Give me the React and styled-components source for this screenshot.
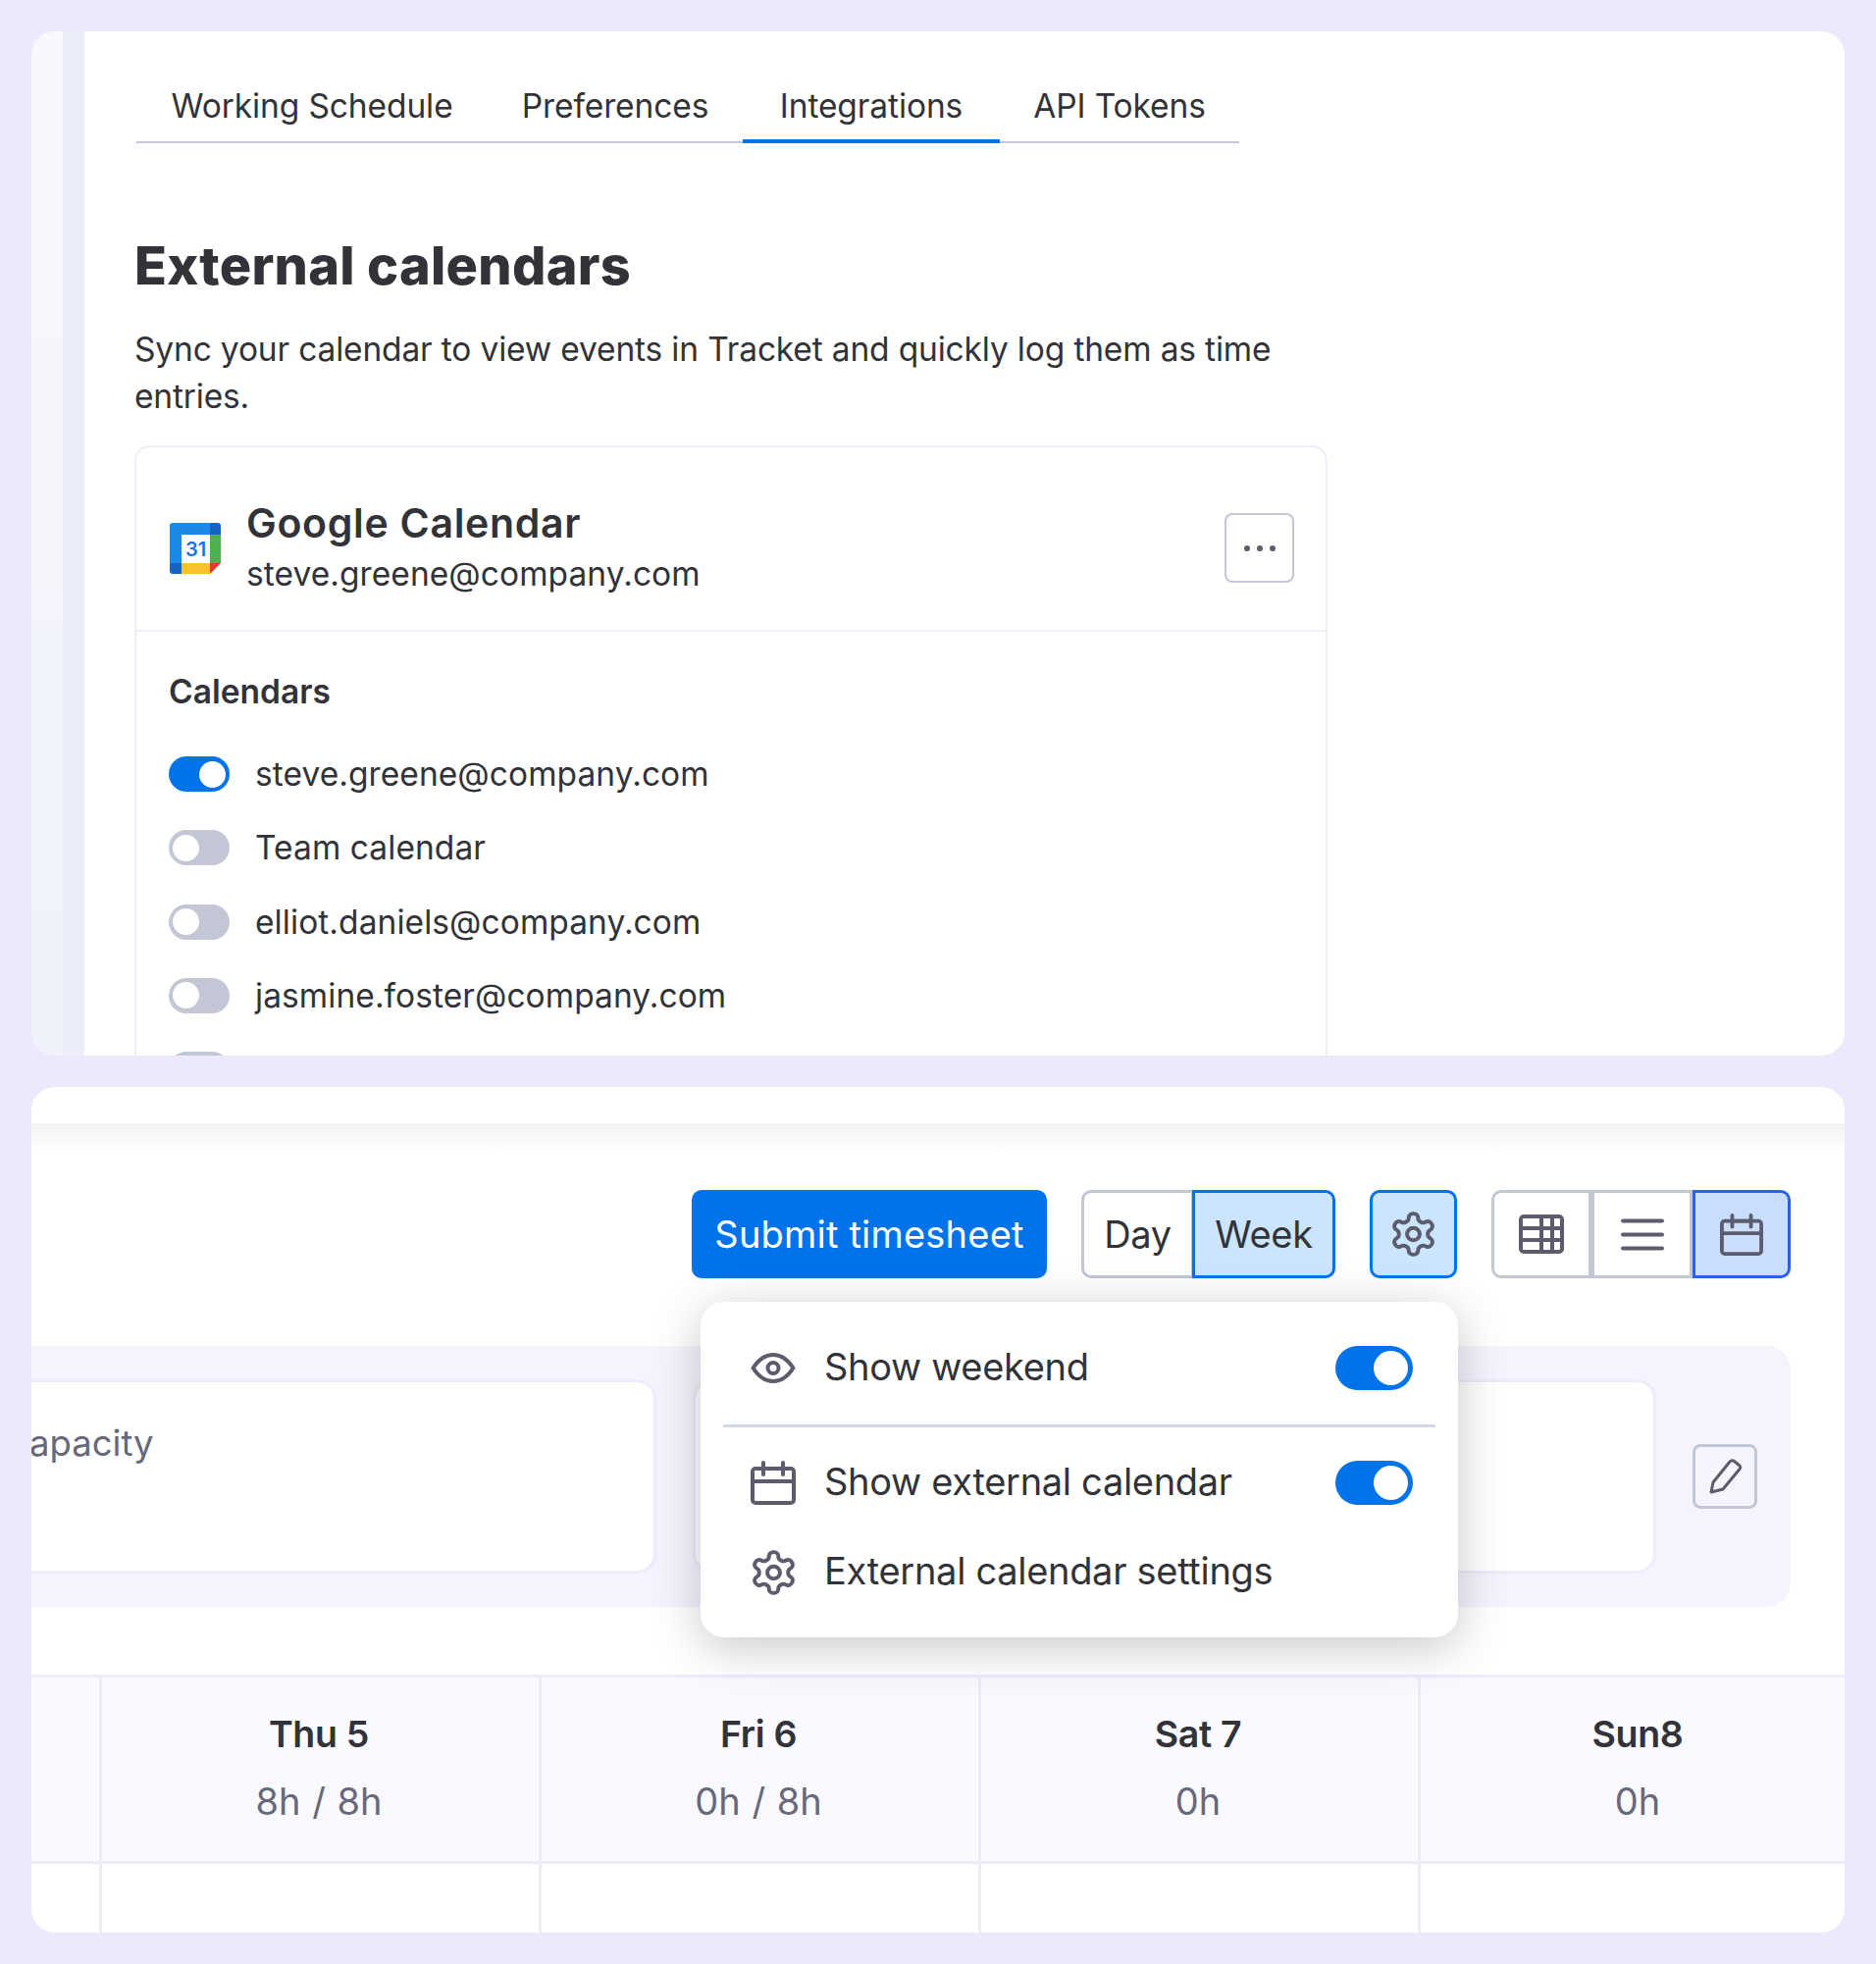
import React from "react";
import styled, { createGlobalStyle } from "styled-components";

const Global = createGlobalStyle`
  html, body { margin: 0; padding: 0; background: #ece9fc; }
  body { font-family: Inter, "Noto Sans", sans-serif; color: #323338; }
  * { box-sizing: border-box; }
`;

const Page = styled.div`
  width: 1912px;
  height: 2002px;
  padding: 32px;
  display: flex;
  flex-direction: column;
  gap: 32px;
  overflow: hidden;
`;

const TopPanel = styled.section`
  height: 1044px;
  background: #fff;
  border-radius: 24px;
  overflow: hidden;
  display: flex;
`;

const Rail = styled.div`
  width: 54px;
  flex: none;
  display: flex;
  background: #ebeef8;
  &::before {
    content: "";
    width: 32px;
    background: linear-gradient(#f9f9fd, #eff2fa);
  }
`;

const Main = styled.main`
  flex: 1;
  padding: 44px 0 0 52px;
`;

const TabBar = styled.nav`
  display: flex;
  width: 1124px;
  height: 70px;
  margin-left: 1px;
  border-bottom: 2px solid #c3c6d4;
`;

const Tab = styled.div`
  width: ${(p) => p.$w}px;
  height: 70px;
  padding-bottom: 3px;
  display: flex;
  align-items: center;
  justify-content: center;
  font-size: 33.5px;
  letter-spacing: -0.1px;
  white-space: nowrap;
  border-bottom: 4px solid ${(p) => (p.$active ? "#0073ea" : "transparent")};
`;

const Heading = styled.h1`
  margin: 93px 0 0 -1px;
  font-size: 54px;
  line-height: 64px;
  font-weight: 800;
  letter-spacing: 0.3px;
`;

const Description = styled.p`
  margin: 28.5px 0 0 -1px;
  font-size: 33.5px;
  line-height: 48px;
  letter-spacing: -0.16px;
  white-space: nowrap;
`;

const Card = styled.div`
  width: 1216px;
  margin: 26.5px 0 0 -1px;
  border: 2px solid #eeeefb;
  border-bottom: 0;
  border-radius: 16px 16px 0 0;
`;

const CardHeader = styled.header`
  height: 188px;
  padding: 20px 32px 0 33px;
  display: flex;
  align-items: center;
  gap: 25px;
  border-bottom: 2px solid #eeeefb;
`;

const Identity = styled.div`
  flex: 1;
`;

const CardTitle = styled.div`
  font-size: 41px;
  line-height: 52px;
  font-weight: 600;
  letter-spacing: 0.7px;
`;

const CardEmail = styled.div`
  font-size: 33.5px;
  line-height: 52px;
  letter-spacing: 0.07px;
`;

const MoreButton = styled.button`
  width: 71px;
  height: 71px;
  margin-top: -1px;
  padding: 0;
  background: #fff;
  border: 2px solid #c3c6d4;
  border-radius: 8px;
  display: flex;
  align-items: center;
  justify-content: center;
  gap: 7px;
`;

const Dot = styled.span`
  width: 6px;
  height: 6px;
  border-radius: 50%;
  background: #5c5c6e;
`;

const CardBody = styled.div`
  padding: 39px 33px 0;
`;

const SectionLabel = styled.div`
  font-size: 33.5px;
  line-height: 44px;
  font-weight: 600;
  letter-spacing: 0;
`;

const CalendarList = styled.div`
  margin-top: 44px;
  display: flex;
  flex-direction: column;
  gap: 39.33px;
`;

const CalendarRow = styled.div`
  height: 36px;
  display: flex;
  align-items: center;
  gap: 26px;
  font-size: 33.5px;
  letter-spacing: 0.07px;
`;

const Toggle = styled.span`
  flex: none;
  width: ${(p) => (p.$large ? 79 : 62)}px;
  height: ${(p) => (p.$large ? 45 : 36)}px;
  padding: ${(p) => (p.$large ? "0 5px" : "0 4px")};
  border-radius: 999px;
  background: ${(p) => (p.$on ? "#0073ea" : "#c3c6d4")};
  display: flex;
  align-items: center;
  justify-content: ${(p) => (p.$on ? "flex-end" : "flex-start")};
  &::after {
    content: "";
    width: ${(p) => (p.$large ? 35 : 27)}px;
    height: ${(p) => (p.$large ? 35 : 27)}px;
    border-radius: 50%;
    background: #fff;
  }
`;

const BottomPanel = styled.section`
  position: relative;
  height: 862px;
  background: #fff;
  border-radius: 24px;
  overflow: hidden;
`;

const TopShade = styled.div`
  height: 30px;
  margin-top: 37px;
  background: linear-gradient(#f3f3f4, #fff);
`;

const Toolbar = styled.div`
  margin-top: 38px;
  padding-right: 55px;
  height: 90px;
  display: flex;
  justify-content: flex-end;
  gap: 35px;
`;

const SubmitButton = styled.button`
  width: 362px;
  border: 0;
  border-radius: 10px;
  background: #0073ea;
  color: #fff;
  font: 400 38px Inter, sans-serif;
  letter-spacing: 0.2px;
`;

const Segmented = styled.div`
  display: flex;
`;

const Segment = styled.div`
  width: ${(p) => p.$w}px;
  display: flex;
  align-items: center;
  justify-content: center;
  font-size: 38px;
  letter-spacing: -0.3px;
  margin-left: ${(p) => p.$overlap || 0}px;
  border: 3px solid ${(p) => (p.$active ? p.$accent || "#0073ea" : "#c3c6d4")};
  background: ${(p) => (p.$active ? p.$fill || "#cce5ff" : "#fff")};
  &:first-child { border-radius: 10px 0 0 10px; }
  &:last-child { border-radius: 0 10px 10px 0; }
`;

const GearButton = styled.div`
  width: 89px;
  display: flex;
  align-items: center;
  justify-content: center;
  background: #cce5ff;
  border: 3px solid #0073ea;
  border-radius: 10px;
`;

const IconSvg = styled.svg`
  flex: none;
  display: block;
  fill: none;
  stroke: #5c5c6e;
  stroke-linecap: round;
  stroke-linejoin: round;
`;

const CapacityBand = styled.div`
  margin-top: 69px;
  width: 1793px;
  height: 266px;
  padding: 34px 34px 34px 0;
  background: #f5f3fe;
  border-radius: 0 24px 24px 0;
  display: flex;
  align-items: flex-start;
  gap: 37px;
  overflow: hidden;
`;

const CapacityCard = styled.div`
  height: 198px;
  flex: ${(p) => (p.$grow ? 1 : "none")};
  width: ${(p) => (p.$grow ? "auto" : "677px")};
  margin-left: ${(p) => (p.$grow ? 0 : -40)}px;
  padding: 39px 0 0 35px;
  background: #fff;
  border: 3px solid #eeecfc;
  border-radius: 20px;
  font-size: 36.5px;
  line-height: 46px;
  color: #676879;
`;

const EditButton = styled.button`
  flex: none;
  width: 66px;
  height: 66px;
  margin-top: 66px;
  padding: 0;
  background: transparent;
  border: 3px solid #c3c6d4;
  border-radius: 8px;
  display: flex;
  align-items: center;
  justify-content: center;
`;

const Popup = styled.div`
  position: absolute;
  top: 219px;
  left: 682px;
  width: 772px;
  height: 342px;
  padding-top: 45px;
  background: #fff;
  border-radius: 24px;
  box-shadow: 0 10px 50px rgba(0, 0, 0, 0.22);
`;

const MenuRow = styled.div`
  height: 45px;
  margin-top: ${(p) => p.$mt || 0}px;
  padding: 0 46px 0 51px;
  display: flex;
  align-items: center;
  font-size: 38px;
  letter-spacing: -0.3px;
`;

const MenuIcon = styled.span`
  width: 46px;
  margin-right: 29px;
  display: flex;
  justify-content: center;
  flex: none;
`;

const MenuText = styled.span`
  flex: 1;
  padding-bottom: 3px;
  white-space: nowrap;
`;

const MenuDivider = styled.div`
  height: 3px;
  margin: 35px 23px 0;
  background: #d5d8e8;
`;

const WeekGrid = styled.div`
  margin-top: 69px;
  display: grid;
  grid-template-columns: 69px repeat(4, 448px);
`;

const HeadCell = styled.div`
  height: 193px;
  padding: 0 3px 4px 0;
  background: #f9f9ff;
  border-top: 3px solid #eeecfc;
  border-bottom: 3px solid #eeecfc;
  border-left: ${(p) => (p.$first ? 0 : "3px solid #eeecfc")};
  display: flex;
  flex-direction: column;
  align-items: center;
  justify-content: center;
  gap: 20px;
`;

const DayName = styled.div`
  font-size: 37.5px;
  line-height: 48px;
  font-weight: 600;
  letter-spacing: -0.3px;
`;

const DayHours = styled.div`
  font-size: 38px;
  line-height: 48px;
  word-spacing: 1px;
  color: #676879;
`;

const BodyCell = styled.div`
  height: 72px;
  border-left: ${(p) => (p.$first ? 0 : "3px solid #eeecfc")};
`;

const CalendarGlyph = ({ w = 46, h = 45 }) => (
  <IconSvg width={w} height={h} viewBox="0 0 46 45" strokeWidth="4">
    <path d="M5 8h36a3 3 0 0 1 3 3v29a3 3 0 0 1-3 3H5a3 3 0 0 1-3-3V11a3 3 0 0 1 3-3z" />
    <path d="M2 21h42M13 2v12M33 2v12M13 8h20" />
  </IconSvg>
);

const GearGlyph = ({ w = 43, h = 46 }) => (
  <IconSvg width={w} height={h} viewBox="2 1 20 22" strokeWidth="1.85" preserveAspectRatio="none">
    <path d="M12.22 2h-.44a2 2 0 0 0-2 2v.18a2 2 0 0 1-1 1.73l-.43.25a2 2 0 0 1-2 0l-.15-.08a2 2 0 0 0-2.73.73l-.22.38a2 2 0 0 0 .73 2.73l.15.1a2 2 0 0 1 1 1.72v.51a2 2 0 0 1-1 1.74l-.15.09a2 2 0 0 0-.73 2.73l.22.38a2 2 0 0 0 2.73.73l.15-.08a2 2 0 0 1 2 0l.43.25a2 2 0 0 1 1 1.73V20a2 2 0 0 0 2 2h.44a2 2 0 0 0 2-2v-.18a2 2 0 0 1 1-1.73l.43-.25a2 2 0 0 1 2 0l.15.08a2 2 0 0 0 2.73-.73l.22-.39a2 2 0 0 0-.73-2.73l-.15-.08a2 2 0 0 1-1-1.74v-.5a2 2 0 0 1 1-1.74l.15-.09a2 2 0 0 0 .73-2.73l-.22-.38a2 2 0 0 0-2.73-.73l-.15.08a2 2 0 0 1-2 0l-.43-.25a2 2 0 0 1-1-1.73V4a2 2 0 0 0-2-2z" />
    <circle cx="12" cy="12" r="3" />
  </IconSvg>
);

const EyeGlyph = () => (
  <IconSvg width="46" height="31" viewBox="0 0 46 31" strokeWidth="4">
    <path d="M2.5 15.5C8 7 15 2 23 2s15 5 20.5 13.5C38 24 31 29 23 29S8 24 2.5 15.500z" />
    <circle cx="23" cy="15.5" r="5.5" />
  </IconSvg>
);

const GridGlyph = () => (
  <IconSvg width="46" height="40" viewBox="0 0 46 40" strokeWidth="4">
    <rect x="2" y="2" width="42" height="36" rx="3" />
    <path d="M2 14h42M2 26h42M23 2v36M34 2v36" />
  </IconSvg>
);

const LinesGlyph = () => (
  <IconSvg width="44" height="33" viewBox="0 0 44 33" strokeWidth="4">
    <path d="M2 2.5h40M2 16.5h40M2 30.5h40" />
  </IconSvg>
);

const PencilGlyph = () => (
  <IconSvg width="35" height="37" viewBox="0 0 35 37" strokeWidth="3">
    <path d="M3 34l2-10L22 3c1-1 3-1.500 4.500-.5l5 4c1.500 1 1.500 3 .5 4L15 31z" />
  </IconSvg>
);

const GoogleCalendarLogo = () => (
  <svg width="54" height="54" viewBox="0 0 54 54" style={{ flex: "none" }}>
    <path d="M4 1h38v12H13v29H1V4a3 3 0 0 1 3-3z" fill="#1e88e5" />
    <path d="M42 1h8a3 3 0 0 1 3 3v9H42z" fill="#1565c0" />
    <rect x="42" y="13" width="11" height="29" fill="#4caf50" />
    <path d="M1 42h12v11H4a3 3 0 0 1-3-3z" fill="#1565c0" />
    <rect x="13" y="42" width="29" height="11" fill="#fbc02d" />
    <path d="M42 42h11L42 53z" fill="#e53935" />
    <text x="27.500" y="35" textAnchor="middle" fontFamily="Inter, sans-serif" fontWeight="600" fontSize="20" fill="#1a73e8">31</text>
  </svg>
);

const tabs = [
  ["Working Schedule", 358],
  ["Preferences", 260],
  ["Integrations", 262],
  ["API Tokens", 244],
];
const calendars = [
  ["steve.greene@company.com", true],
  ["Team calendar", false],
  ["elliot.daniels@company.com", false],
  ["jasmine.foster@company.com", false],
  ["", false],
];
const days = [
  ["Thu 5", "8h / 8h"],
  ["Fri 6", "0h / 8h"],
  ["Sat 7", "0h"],
  ["Sun8", "0h"],
];

export default function App() {
  return (
    <>
      <Global />
      <Page>
        <TopPanel>
          <Rail />
          <Main>
            <TabBar>
              {tabs.map(([t, w]) => (
                <Tab key={t} $w={w} $active={t === "Integrations"}>{t}</Tab>
              ))}
            </TabBar>
            <Heading>External calendars</Heading>
            <Description>
              Sync your calendar to view events in Tracket and quickly log them as time
              <br />
              entries.
            </Description>
            <Card>
              <CardHeader>
                <GoogleCalendarLogo />
                <Identity>
                  <CardTitle>Google Calendar</CardTitle>
                  <CardEmail>steve.greene@company.com</CardEmail>
                </Identity>
                <MoreButton aria-label="More">
                  <Dot /><Dot /><Dot />
                </MoreButton>
              </CardHeader>
              <CardBody>
                <SectionLabel>Calendars</SectionLabel>
                <CalendarList>
                  {calendars.map(([name, on], i) => (
                    <CalendarRow key={i}>
                      <Toggle $on={on} />
                      {name}
                    </CalendarRow>
                  ))}
                </CalendarList>
              </CardBody>
            </Card>
          </Main>
        </TopPanel>

        <BottomPanel>
          <TopShade />
          <Toolbar>
            <SubmitButton>Submit timesheet</SubmitButton>
            <Segmented>
              <Segment $w={115}>Day</Segment>
              <Segment $w={146} $overlap={-2} $active>Week</Segment>
            </Segmented>
            <GearButton><GearGlyph /></GearButton>
            <Segmented>
              <Segment $w={102}><GridGlyph /></Segment>
              <Segment $w={103}><LinesGlyph /></Segment>
              <Segment $w={100} $active $accent="#2563e8" $fill="#c9defd"><CalendarGlyph w={44} h={43} /></Segment>
            </Segmented>
          </Toolbar>
          <CapacityBand>
            <CapacityCard>apacity</CapacityCard>
            <CapacityCard $grow />
            <EditButton aria-label="Edit"><PencilGlyph /></EditButton>
          </CapacityBand>
          <WeekGrid>
            <HeadCell $first />
            {days.map(([d, h]) => (
              <HeadCell key={d}>
                <DayName>{d}</DayName>
                <DayHours>{h}</DayHours>
              </HeadCell>
            ))}
            <BodyCell $first />
            {days.map(([d]) => <BodyCell key={d} />)}
          </WeekGrid>
          <Popup>
            <MenuRow>
              <MenuIcon><EyeGlyph /></MenuIcon>
              <MenuText>Show weekend</MenuText>
              <Toggle $on $large />
            </MenuRow>
            <MenuDivider />
            <MenuRow $mt={34}>
              <MenuIcon><CalendarGlyph /></MenuIcon>
              <MenuText>Show external calendar</MenuText>
              <Toggle $on $large />
            </MenuRow>
            <MenuRow $mt={46}>
              <MenuIcon><GearGlyph /></MenuIcon>
              <MenuText>External calendar settings</MenuText>
            </MenuRow>
          </Popup>
        </BottomPanel>
      </Page>
    </>
  );
}
